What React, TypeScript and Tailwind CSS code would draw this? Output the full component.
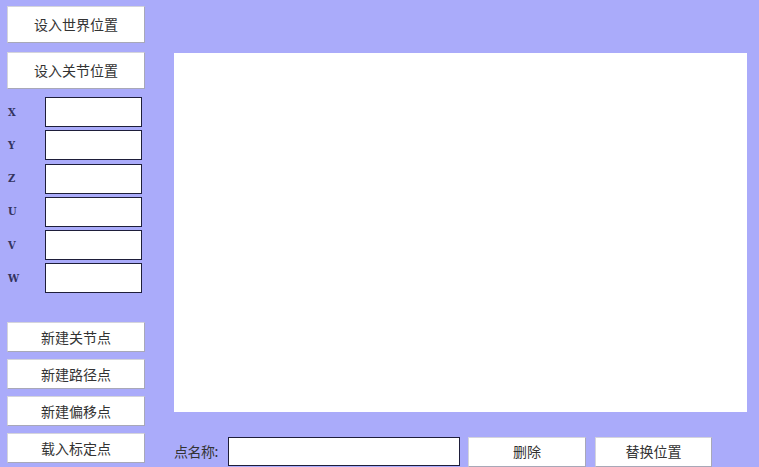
const cjk = "font-['Microsoft_YaHei','Noto_Sans_CJK_SC',sans-serif]";

function Btn({ label, className = "" }: { label: string; className?: string }) {
  return (
    <button
      className={`bg-white border border-[#d4d4dc] border-r-[#a8a8b8] border-b-[#a8a8b8] text-[14px] text-[#333] ${cjk} flex items-center justify-center ${className}`}
    >
      {label}
    </button>
  );
}

function Field({ label }: { label: string }) {
  return (
    <div className="flex items-center h-[30px]">
      <span className="w-[38px] pl-[1px] text-[11px] font-bold text-[#33335e] font-['DejaVu_Serif_Condensed','DejaVu_Serif',serif] leading-none">
        {label}
      </span>
      <div className="w-[97px] h-[30px] bg-white border-[1.5px] border-[#1e1e3a]" />
    </div>
  );
}

export default function App() {
  return (
    <div className="w-[759px] h-[467px] bg-[#aaabfa] flex overflow-hidden">
      <div className="w-[166px] pl-[7px] pt-[6px] flex flex-col">
        <Btn label="设入世界位置" className="w-[138px] h-[37px]" />
        <Btn label="设入关节位置" className="w-[138px] h-[37px] mt-[9px]" />
        <div className="flex flex-col gap-[3.3px] mt-[8px]">
          {["X", "Y", "Z", "U", "V", "W"].map((l) => (
            <Field key={l} label={l} />
          ))}
        </div>
        <div className="flex flex-col gap-[7px] mt-[29px]">
          <Btn label="新建关节点" className="w-[138px] h-[30px]" />
          <Btn label="新建路径点" className="w-[138px] h-[30px]" />
          <Btn label="新建偏移点" className="w-[138px] h-[30px]" />
          <Btn label="载入标定点" className="w-[138px] h-[30px]" />
        </div>
      </div>
      <div className="flex-1 pt-[53px] pl-[8px] flex flex-col">
        <div className="w-[573px] h-[359px] bg-white" />
        <div className="flex items-center mt-[25px] h-[29px]">
          <span className={`text-[14px] text-[#333] ${cjk} w-[54px] tracking-[-0.5px]`}>点名称:</span>
          <div className="w-[232px] h-[29px] bg-white border-[1.5px] border-[#1e1e3a]" />
          <Btn label="删除" className="w-[118px] h-[30px] ml-[8px]" />
          <Btn label="替换位置" className="w-[117px] h-[30px] ml-[9px]" />
        </div>
      </div>
    </div>
  );
}
